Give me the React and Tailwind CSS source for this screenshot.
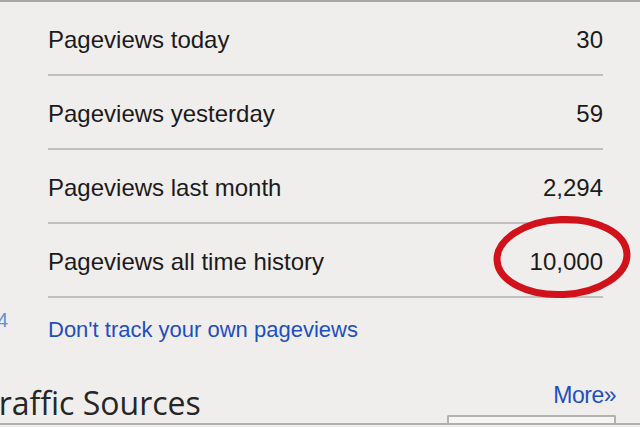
import React from 'react';

const stats = [
    { label: 'Pageviews today', value: '30' },
    { label: 'Pageviews yesterday', value: '59' },
    { label: 'Pageviews last month', value: '2,294' },
    { label: 'Pageviews all time history', value: '10,000', circled: true },
];

const StatRow = ({ label, value, circled }) => (
    <div className="relative flex items-center justify-between h-[74px] pt-[4px] border-b-2 border-[#c2c0be] text-[24px] text-[#1b1b1b]">
        <span>{label}</span>
        <span>{value}</span>
        {circled && (
            <svg className="absolute right-[-30px] top-[-15px] pointer-events-none" width="150" height="96" viewBox="0 0 150 96">
                <ellipse cx="79" cy="48" rx="65" ry="37.5" fill="none" stroke="#d2121b" strokeWidth="7" transform="rotate(-3 79 48)" />
            </svg>
        )}
    </div>
);

const App = () => {
    return (
        <div className="w-[640px] h-[427px] overflow-hidden bg-[#f0eeec] border-t-2 border-[#a9a7a5]" style={{ fontFamily: '"Liberation Sans", Arial, sans-serif' }}>
            <div className="pl-[48px] pr-[37px]">
                {stats.map((s) => <StatRow key={s.label} {...s} />)}
            </div>
            <div className="flex items-start h-[52px] pt-[19px]">
                <span className="w-[48px] -ml-[3px] -mt-[9px] text-[20px] leading-[24px] text-[#5f92d6]">4</span>
                <a className="-ml-[-3px] text-[22px] leading-[26px] text-[#1f4fbf]">Don't track your own pageviews</a>
            </div>
            <div className="flex justify-between h-[73px]">
                <h2 className="-ml-[19px] pt-[33px] text-[32px] leading-[40px] text-[#262626]" style={{ fontFamily: '"Open Sans", sans-serif' }}>Traffic Sources</h2>
                <div className="flex flex-col items-end w-[192px] pr-[24px]">
                    <a className="mt-[32px] text-[23px] leading-[26px] text-[#1f4fbf] tracking-[-0.5px]">More»</a>
                    <div className="mt-auto w-[169px] h-[8px] border-t-2 border-x-2 border-[#b4b2b0] bg-[#f6f5f4] rounded-t-[2px]"></div>
                </div>
            </div>
            <div className="h-[2px] bg-[#b1afad]"></div>
        </div>
    );
};

export default App;
